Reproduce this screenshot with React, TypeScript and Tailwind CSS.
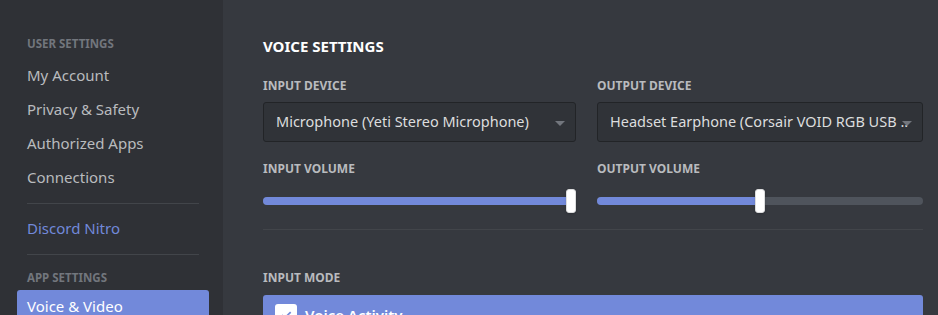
import React from 'react';

const font = { fontFamily: '"Noto Sans", "Open Sans", sans-serif' };

function NavItem({ label, active, accent }: { label: string; active?: boolean; accent?: boolean }) {
  return (
    <div
      className={`h-8 mb-0.5 px-2.5 flex items-center rounded-[3px] text-[15px] ${
        active ? 'bg-[#7289da] text-white' : accent ? 'text-[#7289da]' : 'text-[#b9bbbe]'
      }`}
    >
      {label}
    </div>
  );
}

function Select({ value }: { value: string }) {
  return (
    <div className="relative h-10 flex items-center pl-3 rounded-[3px] bg-[#303338] border border-[#222427] overflow-hidden">
      <span className="text-[14.5px] text-[#dcddde] whitespace-nowrap">{value}</span>
      <svg width="10" height="5" viewBox="0 0 10 5" className="absolute right-[10px] top-[18px]">
        <path d="M0 0h10L5 5z" fill="#72767d" />
      </svg>
    </div>
  );
}

function Slider({ pct }: { pct: number }) {
  return (
    <div className="relative h-6 flex items-center">
      <div className="w-full h-2 rounded-full bg-[#4f545c] overflow-hidden">
        <div className="h-full bg-[#7289da]" style={{ width: `${pct}%` }} />
      </div>
      <div
        className="absolute top-0 w-2.5 h-6 -ml-[5px] rounded-[3px] bg-white border border-[#dcddde] shadow"
        style={{ left: `${pct}%` }}
      />
    </div>
  );
}

function Label({ children }: { children: React.ReactNode }) {
  return <div className="h-4 text-[12px] font-bold uppercase text-[#b9bbbe] leading-4">{children}</div>;
}

export default function App() {
  return (
    <div className="flex w-[938px] h-[315px] overflow-hidden bg-[#36393f]" style={font}>
      {/* Sidebar */}
      <aside className="w-[223px] shrink-0 bg-[#2f3136] pt-8 pl-[17px] pr-[14px]">
        <div className="h-6 px-2.5 flex items-center text-[11.5px] font-bold uppercase text-[#72767d] mb-[3px]">
          User Settings
        </div>
        <NavItem label="My Account" />
        <NavItem label="Privacy & Safety" />
        <NavItem label="Authorized Apps" />
        <NavItem label="Connections" />
        <div className="mx-2.5 mt-2.5 mb-2 h-px bg-[#42454a]" />
        <NavItem label="Discord Nitro" accent />
        <div className="mx-2.5 mt-2.5 h-px bg-[#42454a]" />
        <div className="h-6 mt-[11px] px-2.5 flex items-center text-[11.5px] font-bold uppercase text-[#72767d]">
          App Settings
        </div>
        <NavItem label="Voice & Video" active />
      </aside>

      {/* Content */}
      <main className="flex-1 pt-9 pl-10">
        <div className="w-[660px]">
          <h2 className="h-5 leading-5 text-[15px] font-bold uppercase text-white">Voice Settings</h2>
          <div className="mt-[22px] flex gap-[21px]">
            <div className="w-[313px]">
              <Label>Input Device</Label>
              <div className="mt-2">
                <Select value="Microphone (Yeti Stereo Microphone)" />
              </div>
              <div className="mt-[19px]">
                <Label>Input Volume</Label>
              </div>
              <div className="mt-3">
                <Slider pct={98.4} />
              </div>
            </div>
            <div className="w-[326px]">
              <Label>Output Device</Label>
              <div className="mt-2">
                <Select value="Headset Earphone (Corsair VOID RGB USB .." />
              </div>
              <div className="mt-[19px]">
                <Label>Output Volume</Label>
              </div>
              <div className="mt-3">
                <Slider pct={50} />
              </div>
            </div>
          </div>
          <div className="mt-[16px] h-px bg-[#42454a]" />
          <div className="mt-[40px]">
            <Label>Input Mode</Label>
          </div>
          <div className="mt-[9px] h-10 rounded-[3px] bg-[#7289da] flex items-center px-3 gap-2">
            <div className="w-[22px] h-[22px] rounded-[3px] bg-white flex items-center justify-center">
              <svg width="14" height="14" viewBox="0 0 24 24">
                <path d="M5 12l5 5L20 7" stroke="#7289da" strokeWidth="3" fill="none" />
              </svg>
            </div>
            <span className="text-[15px] text-white font-semibold">Voice Activity</span>
          </div>
        </div>
      </main>
    </div>
  );
}
